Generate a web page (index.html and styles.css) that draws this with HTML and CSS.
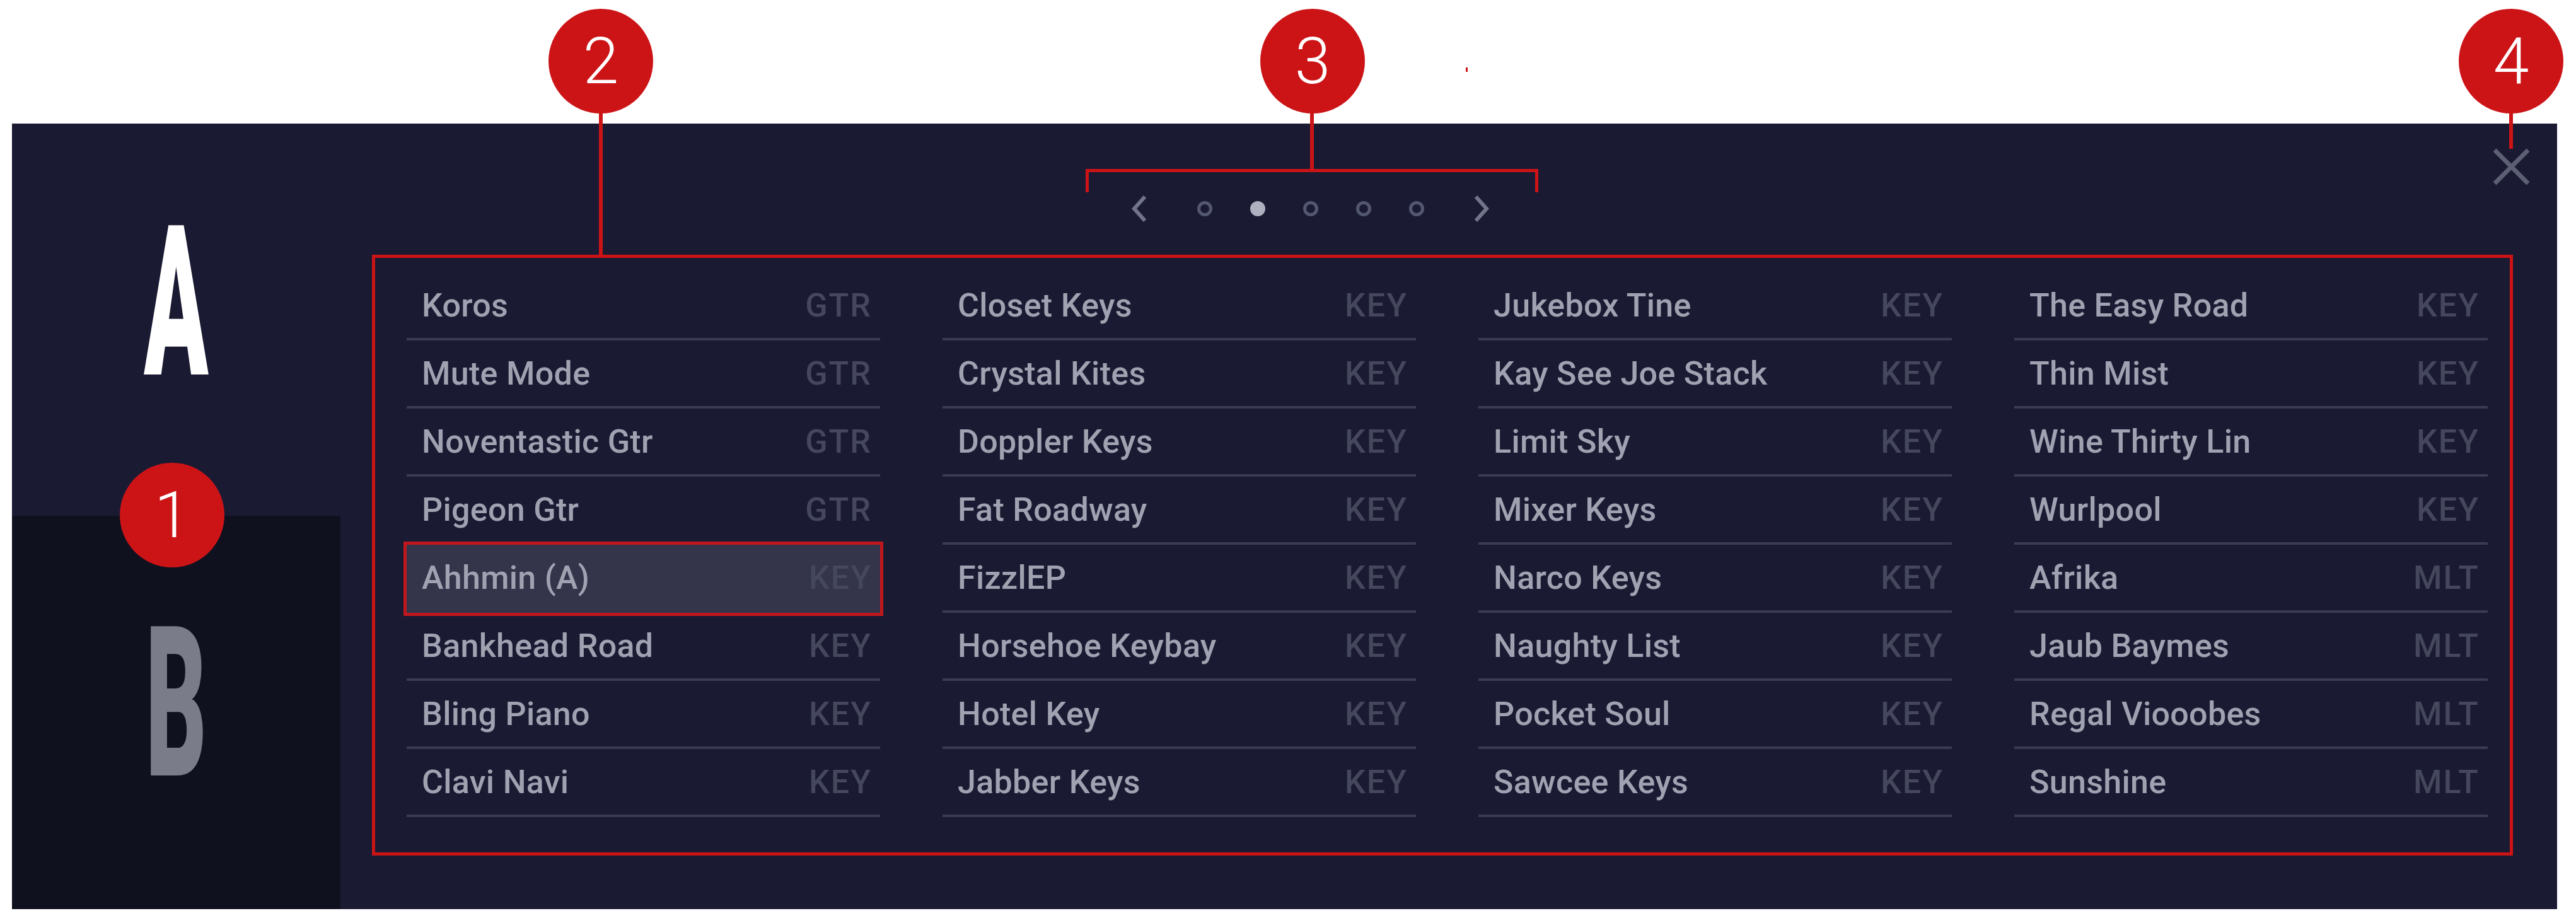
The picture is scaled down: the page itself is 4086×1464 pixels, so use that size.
FILE: index.html
```html
<!DOCTYPE html>
<html lang="en">
<head>
<meta charset="utf-8">
<title>Sound browser</title>
<link rel="stylesheet" href="styles.css">
</head>
<body>
<div class="stage">
  <div class="panel">
    <aside class="sidebar">
      <div class="tab tab-a"><span class="letter">A</span></div>
      <div class="tab tab-b"><span class="letter">B</span></div>
    </aside>
    <main class="main">
      <div class="topbar">
        <nav class="pager">
          <svg class="chev chev-left" viewBox="0 0 24 42" width="24" height="42"><polyline points="21,2 4,21 21,40"/></svg>
          <span class="dot"></span>
          <span class="dot active"></span>
          <span class="dot"></span>
          <span class="dot"></span>
          <span class="dot"></span>
          <svg class="chev chev-right" viewBox="0 0 24 42" width="24" height="42"><polyline points="3,2 20,21 3,40"/></svg>
        </nav>
        <svg class="close" viewBox="0 0 59 59" width="59" height="59"><line x1="3" y1="3" x2="56" y2="56"/><line x1="56" y1="3" x2="3" y2="56"/></svg>
      </div>
      <section class="list">
        <div class="col">
          <div class="row"><span class="name">Koros</span><span class="tag">GTR</span></div>
          <div class="row"><span class="name">Mute Mode</span><span class="tag">GTR</span></div>
          <div class="row"><span class="name">Noventastic Gtr</span><span class="tag">GTR</span></div>
          <div class="row"><span class="name">Pigeon Gtr</span><span class="tag">GTR</span></div>
          <div class="row selected"><span class="name">Ahhmin (A)</span><span class="tag">KEY</span></div>
          <div class="row"><span class="name">Bankhead Road</span><span class="tag">KEY</span></div>
          <div class="row"><span class="name">Bling Piano</span><span class="tag">KEY</span></div>
          <div class="row"><span class="name">Clavi Navi</span><span class="tag">KEY</span></div>
        </div>
        <div class="col">
          <div class="row"><span class="name">Closet Keys</span><span class="tag">KEY</span></div>
          <div class="row"><span class="name">Crystal Kites</span><span class="tag">KEY</span></div>
          <div class="row"><span class="name">Doppler Keys</span><span class="tag">KEY</span></div>
          <div class="row"><span class="name">Fat Roadway</span><span class="tag">KEY</span></div>
          <div class="row"><span class="name">FizzlEP</span><span class="tag">KEY</span></div>
          <div class="row"><span class="name">Horsehoe Keybay</span><span class="tag">KEY</span></div>
          <div class="row"><span class="name">Hotel Key</span><span class="tag">KEY</span></div>
          <div class="row"><span class="name">Jabber Keys</span><span class="tag">KEY</span></div>
        </div>
        <div class="col">
          <div class="row"><span class="name">Jukebox Tine</span><span class="tag">KEY</span></div>
          <div class="row"><span class="name">Kay See Joe Stack</span><span class="tag">KEY</span></div>
          <div class="row"><span class="name">Limit Sky</span><span class="tag">KEY</span></div>
          <div class="row"><span class="name">Mixer Keys</span><span class="tag">KEY</span></div>
          <div class="row"><span class="name">Narco Keys</span><span class="tag">KEY</span></div>
          <div class="row"><span class="name">Naughty List</span><span class="tag">KEY</span></div>
          <div class="row"><span class="name">Pocket Soul</span><span class="tag">KEY</span></div>
          <div class="row"><span class="name">Sawcee Keys</span><span class="tag">KEY</span></div>
        </div>
        <div class="col">
          <div class="row"><span class="name">The Easy Road</span><span class="tag">KEY</span></div>
          <div class="row"><span class="name">Thin Mist</span><span class="tag">KEY</span></div>
          <div class="row"><span class="name">Wine Thirty Lin</span><span class="tag">KEY</span></div>
          <div class="row"><span class="name">Wurlpool</span><span class="tag">KEY</span></div>
          <div class="row"><span class="name">Afrika</span><span class="tag">MLT</span></div>
          <div class="row"><span class="name">Jaub Baymes</span><span class="tag">MLT</span></div>
          <div class="row"><span class="name">Regal Viooobes</span><span class="tag">MLT</span></div>
          <div class="row"><span class="name">Sunshine</span><span class="tag">MLT</span></div>
        </div>
      </section>
    </main>
  </div>

  <div class="lead lead-2"></div>
  <div class="lead lead-3"></div>
  <div class="lead lead-4"></div>
  <div class="bracket"></div>
  <div class="tick"></div>
  <div class="badge badge-1">1</div>
  <div class="badge badge-2">2</div>
  <div class="badge badge-3">3</div>
  <div class="badge badge-4">4</div>
</div>
</body>
</html>
```

FILE: styles.css
```css
html, body {
  margin: 0;
  padding: 0;
  background: #ffffff;
}

.stage {
  position: relative;
  width: 4086px;
  height: 1464px;
  overflow: hidden;
  font-family: Roboto, "Liberation Sans", sans-serif;
}

.panel {
  margin: 196px 0 0 19px;
  width: 4037px;
  height: 1246px;
  display: flex;
  background: #1a1a33;
}

/* sidebar A / B */
.sidebar {
  width: 522px;
  display: flex;
  flex-direction: column;
}

.tab {
  display: flex;
  justify-content: center;
  align-items: flex-start;
  box-sizing: border-box;
}

.tab-a {
  height: 622px;
  padding-top: 118px;
}

.tab-b {
  flex: 1;
  background: #10111f;
  padding-top: 132px;
}

.letter {
  display: inline-block;
  font-family: Roboto, "Liberation Sans", sans-serif;
  font-weight: 900;
  font-size: 333px;
  line-height: 1;
  transform: scaleX(0.45);
  transform-origin: center;
}

.tab-a .letter { color: #ffffff; }
.tab-b .letter { color: #7b7c8a; }

/* main area */
.main {
  flex: 1;
  display: flex;
  flex-direction: column;
  padding: 0 70px 0 50px;
}

.topbar {
  height: 208px;
  display: flex;
  align-items: flex-start;
}

.pager {
  margin-top: 114px;
  margin-left: 1205px;
  height: 42px;
  display: flex;
  align-items: center;
  gap: 60px;
}

.chev {
  display: block;
  fill: none;
  stroke: #72758a;
  stroke-width: 6;
}

.chev-left { margin-right: 20px; }
.chev-right { margin-left: 19px; }

.dot {
  width: 24px;
  height: 24px;
  box-sizing: border-box;
  border-radius: 50%;
  border: 5px solid #545770;
}

.dot.active {
  border: none;
  background: #aeb0bf;
}

.close {
  display: block;
  margin-left: auto;
  margin-top: 39px;
  margin-right: -27px;
  stroke: #5d6074;
  stroke-width: 7;
}

/* preset list */
.list {
  height: 953px;
  box-sizing: border-box;
  border: 5px solid #cc1417;
  padding: 23px 35px 0 50px;
  display: flex;
  gap: 99px;
}

.col {
  width: 751px;
  display: flex;
  flex-direction: column;
}

.row {
  height: 108px;
  box-sizing: border-box;
  border-bottom: 4px solid #3a3b55;
  padding: 0 13px 0 24px;
  display: flex;
  align-items: center;
  justify-content: space-between;
  font-size: 52px;
  font-weight: 500;
  letter-spacing: 0.3px;
  white-space: nowrap;
}

.name { color: #a0a2b1; }
.tag { color: #45475d; letter-spacing: 2px; }

.row.selected {
  background: #34354b;
  outline: 5px solid #c0171d;
  border-bottom-color: #34354b;
}

/* annotations */
.badge {
  position: absolute;
  width: 166px;
  height: 166px;
  border-radius: 50%;
  background: #cc1417;
  color: #ffffff;
  font-family: Roboto, "Liberation Sans", sans-serif;
  font-weight: 300;
  font-size: 102px;
  line-height: 166px;
  text-align: center;
}

.badge-1 { left: 190px; top: 734px; }
.badge-2 { left: 870px; top: 14px; }
.badge-3 { left: 1999px; top: 14px; }
.badge-4 { left: 3900px; top: 14px; }

.lead {
  position: absolute;
  width: 6px;
  background: #cc1417;
}

.lead-2 { left: 950px; top: 178px; height: 228px; }
.lead-3 { left: 2078px; top: 178px; height: 92px; }
.lead-4 { left: 3980px; top: 178px; height: 58px; }

.bracket {
  position: absolute;
  left: 1722px;
  top: 268px;
  width: 718px;
  height: 37px;
  box-sizing: border-box;
  border: 5px solid #cc1417;
  border-bottom: none;
}

.tick {
  position: absolute;
  left: 2325px;
  top: 107px;
  width: 3px;
  height: 7px;
  background: #cc1417;
}
```
